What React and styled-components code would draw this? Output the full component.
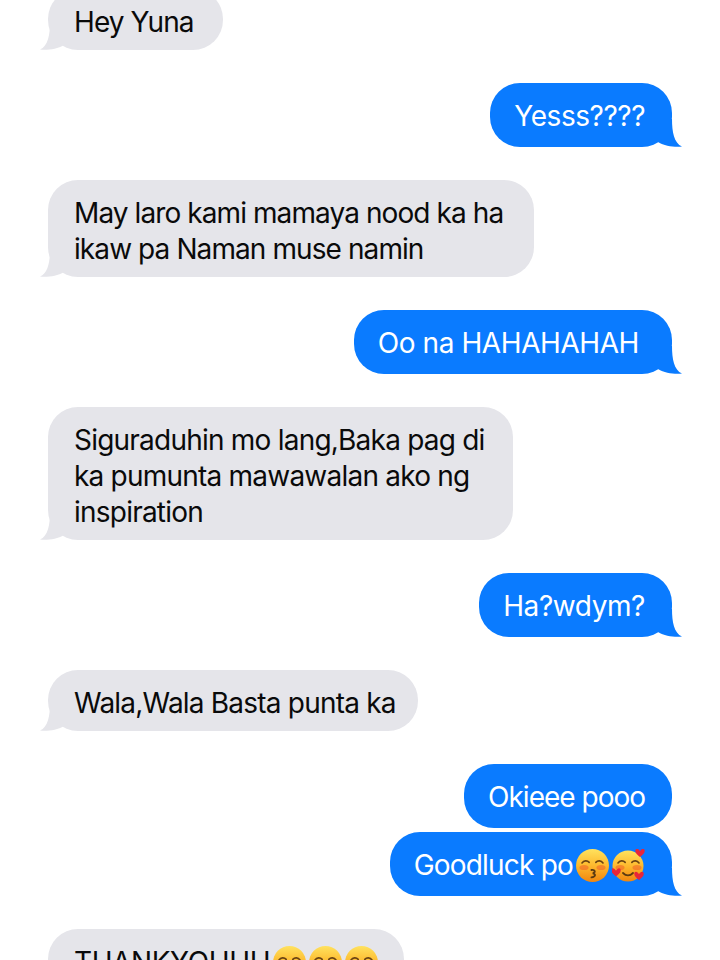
import React from 'react'
import styled, { createGlobalStyle } from 'styled-components'

const GlobalStyle = createGlobalStyle`
  html, body {
    margin: 0;
    padding: 0;
    background: #fff;
  }
`

const Thread = styled.div`
  width: 720px;
  height: 960px;
  overflow: hidden;
  display: flex;
  flex-direction: column;
  gap: 33px;
  box-sizing: border-box;
  padding: 0 48px;
  font-family: Inter, "Liberation Sans", sans-serif;
`

const Group = styled.div`
  display: flex;
  flex-direction: column;
  gap: 4px;
  align-items: ${(p) => (p.$mine ? 'flex-end' : 'flex-start')};
  flex-shrink: 0;
  &:first-child {
    margin-top: -11px;
  }
`

const Bubble = styled.div`
  position: relative;
  box-sizing: border-box;
  display: flex;
  align-items: center;
  padding-top: 15px;
  padding-bottom: ${(p) => (p.$mine ? '13px' : '10px')};
  padding-left: ${(p) => (p.$mine ? '24px' : '26px')};
  padding-right: ${(p) => p.$end || 27}px;
  border-radius: 30px;
  background: ${(p) => (p.$mine ? '#0a7bff' : '#e5e5ea')};
  color: ${(p) => (p.$mine ? '#fff' : '#0a0a0a')};
  font-size: 28px;
  font-weight: 375;
  line-height: 36px;
  letter-spacing: ${(p) => p.$track ?? -0.91}px;
  white-space: pre;
`

const Tail = styled.svg`
  position: absolute;
  bottom: 0;
  width: 32px;
  height: 28px;
  ${(p) => (p.$mine ? 'right: -10px;' : 'left: -8px; transform: scaleX(-1);')}
`

const Emoji = styled.svg`
  width: 33px;
  height: 33px;
  margin-left: 3px;
  flex-shrink: 0;
`

const FaceDefs = ({ id }) => (
  <defs>
    <linearGradient id={id} x1="0" y1="0" x2="0" y2="1">
      <stop offset="0%" stopColor="#ffe25e" />
      <stop offset="50%" stopColor="#fdb92e" />
      <stop offset="100%" stopColor="#f0860f" />
    </linearGradient>
  </defs>
)

const Eyes = () => (
  <g fill="none" stroke="#6b4413" strokeWidth="1.6" strokeLinecap="round">
    <path d="M6 14c1.8-2.6 5.2-2.8 7.2-.6" />
    <path d="M19.8 13.4c2-2.2 5.4-2 7.2.6" />
  </g>
)

const Blush = () => (
  <g fill="#f0602a" opacity="0.55">
    <ellipse cx="8" cy="18.5" rx="4.5" ry="2.6" />
    <ellipse cx="25" cy="18.5" rx="4.5" ry="2.6" />
  </g>
)

const KissFace = () => (
  <Emoji viewBox="0 0 33 33">
    <FaceDefs id="kiss" />
    <circle cx="16.5" cy="16.5" r="16.5" fill="url(#kiss)" />
    <Eyes />
    <Blush />
    <path
      d="M15.5 21c3.5-.6 4.6 2.6 1.2 3.4 3.4.4 3 3.6-1.2 4"
      fill="none"
      stroke="#5b3a12"
      strokeWidth="1.9"
      strokeLinecap="round"
    />
  </Emoji>
)

const Heart = ({ x, y, s }) => (
  <path
    transform={`translate(${x} ${y}) scale(${s})`}
    d="M0 3C-1.5-.5-5-.5-5 2.5-5 5-2 7 0 9 2 7 5 5 5 2.5 5-.5 1.5-.5 0 3Z"
    fill="#e8253a"
  />
)

const LoveFace = () => (
  <Emoji viewBox="0 0 33 33">
    <FaceDefs id="love" />
    <circle cx="16" cy="17" r="15.5" fill="url(#love)" />
    <Eyes />
    <Blush />
    <path d="M11 24c3 3 7 3 10 0" fill="none" stroke="#5b3a12" strokeWidth="1.8" strokeLinecap="round" />
    <Heart x={28} y={-0.5} s={0.95} />
    <Heart x={4} y={19} s={0.95} />
    <Heart x={27} y={22.5} s={0.95} />
  </Emoji>
)

const SmileFace = ({ id }) => (
  <Emoji viewBox="0 0 33 33">
    <FaceDefs id={id} />
    <circle cx="16.5" cy="16.5" r="16.5" fill={`url(#${id})`} />
    <Eyes />
    <Blush />
    <path d="M10 22c3.5 4 9.5 4 13 0" fill="none" stroke="#5b3a12" strokeWidth="1.8" strokeLinecap="round" />
  </Emoji>
)

const TailShape = ({ mine }) => (
  <Tail $mine={mine} viewBox="0 0 32 28">
    <path
      d="M4 0H22C22 13 24 24 32 27.6 25 28.4 15 27.4 8 23L4 23Z"
      fill={mine ? '#0a7bff' : '#e5e5ea'}
    />
  </Tail>
)

const Message = ({ mine, end, track, children }) => (
  <Bubble $mine={mine} $end={end} $track={track}>
    {children}
    <TailShape mine={mine} />
  </Bubble>
)

const App = () => (
  <>
    <GlobalStyle />
    <Thread>
      <Group>
        <Message end={29}>Hey Yuna</Message>
      </Group>
      <Group $mine>
        <Message mine track={-0.45}>Yesss????</Message>
      </Group>
      <Group>
        <Message end={31}>{'May laro kami mamaya nood ka ha\nikaw pa Naman muse namin'}</Message>
      </Group>
      <Group $mine>
        <Message mine end={33} track={-0.42}>Oo na HAHAHAHAH</Message>
      </Group>
      <Group>
        <Message end={28} track={-0.78}>{'Siguraduhin mo lang,Baka pag di\nka pumunta mawawalan ako ng\ninspiration'}</Message>
      </Group>
      <Group $mine>
        <Message mine track={-0.42}>Ha?wdym?</Message>
      </Group>
      <Group>
        <Message end={22} track={-0.79}>Wala,Wala Basta punta ka</Message>
      </Group>
      <Group $mine>
        <Bubble $mine $end={27} $track={-1}>Okieee pooo</Bubble>
        <Message mine track={-0.8}>
          Goodluck po
          <KissFace />
          <LoveFace />
        </Message>
      </Group>
      <Group>
        <Message end={26} track={-0.4}>
          THANKYOUUU
          <SmileFace id="smile-a" />
          <SmileFace id="smile-b" />
          <SmileFace id="smile-c" />
        </Message>
      </Group>
    </Thread>
  </>
)

export default App
